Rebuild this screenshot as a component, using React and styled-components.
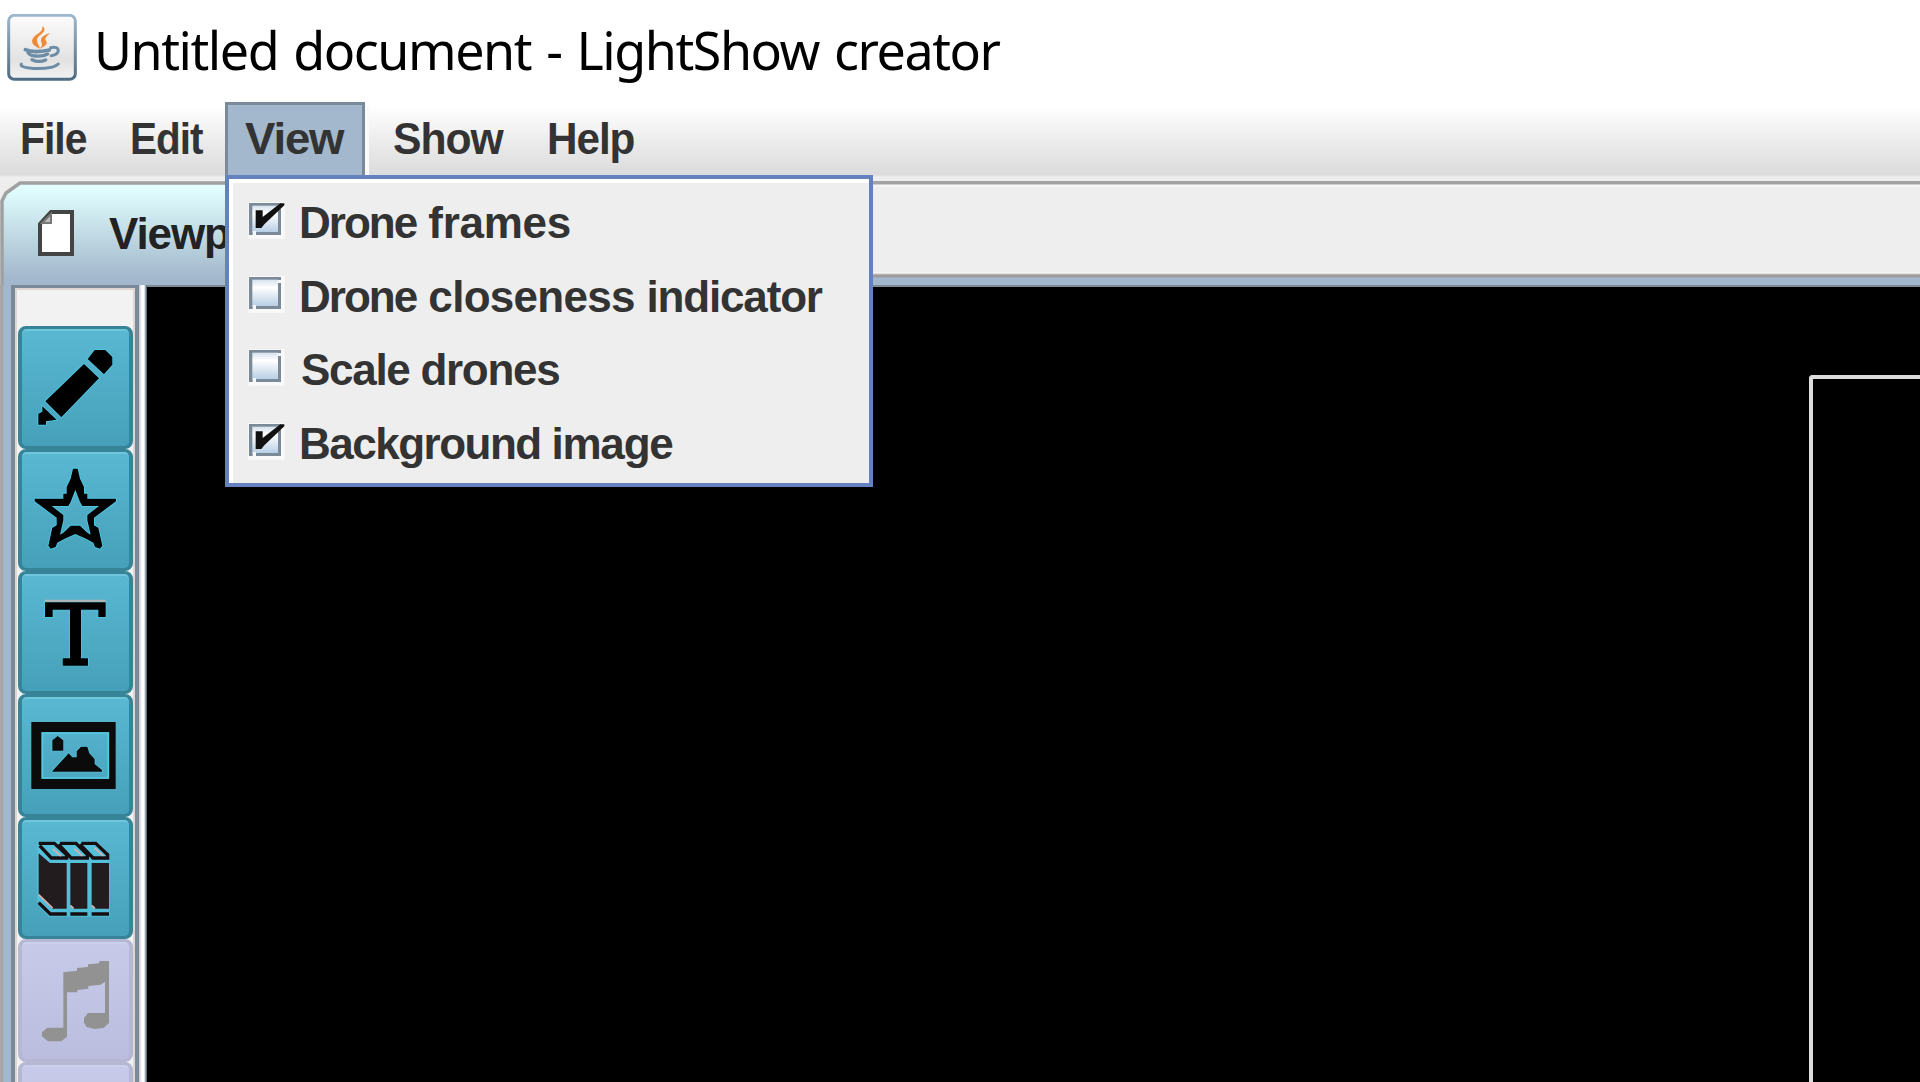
import React from "react";
import styled, { createGlobalStyle } from "styled-components";

const Global = createGlobalStyle`
  * { box-sizing: border-box; }
  body { margin: 0; background: #000; overflow: hidden; }
`;

const Window = styled.div`
  width: 1920px;
  height: 1082px;
  display: flex;
  flex-direction: column;
  overflow: hidden;
  background: #eee;
  font-family: "Liberation Sans", Arial, sans-serif;
`;

const TitleBar = styled.header`
  height: 102px;
  flex: none;
  display: flex;
  padding: 14px 0 0 7px;
  background: #fff;
`;

const Title = styled.h1`
  margin: 0 0 0 17px;
  font: 400 52px/72px "Noto Sans", "Open Sans", sans-serif;
  letter-spacing: -1.45px;
  word-spacing: 3px;
  color: #000;
  white-space: pre;
`;

const MenuBar = styled.nav`
  height: 79px;
  flex: none;
  display: flex;
  background: linear-gradient(#fff 0, #fff 3px, #dcdcdc 71px, #dcdcdc 73px, #eee 75px, #eee 79px);
`;

const MenuSlot = styled.div`
  position: relative;
  width: ${(p) => p.$w}px;
  height: 73px;
  padding-left: ${(p) => p.$pad}px;
  ${(p) =>
    p.$open &&
    `background: #a3b8cc; border: solid #7a8a99; border-width: 3px 3px 0 3px; box-shadow: 4px 3px 0 #fafafa;`}
`;

const Label = styled.span`
  display: block;
  font-weight: 700;
  font-size: 44px;
  line-height: 50px;
  letter-spacing: -1.1px;
  color: #333;
  white-space: pre;
  transform: scaleX(${(p) => p.$stretch ?? 1});
  transform-origin: 0 0;
`;

const MenuLabel = styled(Label)`
  margin-top: ${(p) => (p.$open ? 9 : 12)}px;
`;

const Word = styled.span`
  letter-spacing: ${(p) => p.$track}px;
  word-spacing: ${(p) => p.$space ?? 0}px;
`;

const Popup = styled.div`
  position: absolute;
  z-index: 5;
  left: -3px;
  top: 70px;
  width: 648px;
  height: 312px;
  padding: 19px 0 0 16px;
  border: 4px solid #6382bf;
  background: #eee;
  box-shadow: inset 4px 4px 0 #fff;
`;

const Item = styled.div`
  display: flex;
  height: 73.6px;
`;

const Check = styled.svg`
  width: 42px;
  height: 42px;
  flex: none;
  margin: 2px ${(p) => p.$gap}px 0 2px;
`;

const TabStrip = styled.div`
  height: 104px;
  flex: none;
  display: flex;
  background: linear-gradient(#a2a2a2 0 3px, #f8f8f8 4px, #eee 7px, #eee 90px, #f6f6f6 92px, #a09c9a 94px, #a09c9a 96px, #a3b8cc 97px, #a3b8cc 104px);
`;

const Tab = styled.div`
  display: flex;
  width: 400px;
  height: 104px;
  background: #eee;
  position: relative;
`;

const TabShape = styled.svg`
  position: absolute;
  inset: 0;
  width: 400px;
  height: 104px;
`;

const TabLabel = styled(Label)`
  position: relative;
  margin: 28px 0 0 109px;
  color: #222;
`;

const Body = styled.main`
  flex: 1;
  min-height: 0;
  display: flex;
  background: linear-gradient(to right, #a6a6a6 0 3px, #a3b8cc 4px, #a3b8cc 11px);
`;

const ToolBar = styled.aside`
  width: 128px;
  margin-left: 11px;
  padding: 38px 2px 0 3px;
  border: solid #7a8a99;
  border-width: 3px 4px 0 4px;
  background: #f2f2f2;
  box-shadow: inset 2px 2px 0 #ddd6d3, inset -2px 0 0 #ddd6d3;
  overflow: hidden;
`;

const ToolButton = styled.div`
  width: 115px;
  height: 122.7px;
  padding-top: 1px;
  border: 4px solid ${(p) => (p.$off ? "#b5b7d3" : "#378499")};
  border-width: 3px 4px;
  border-radius: 8px;
  background: ${(p) =>
    p.$off ? "linear-gradient(#c7cae9, #babddd)" : "linear-gradient(#5ab8d2, #46a0b9)"};
  box-shadow: inset 0 2px 0 ${(p) => (p.$off ? "#cdd0ed" : "#70c6dc")};

  svg {
    display: block;
    width: 115px;
    height: 122.7px;
    margin: -3px 0 0 -4px;
  }
`;

const Gutter = styled.div`
  width: 8px;
  background: linear-gradient(to right, #c4c8d2, #fff 3px, #fff 5px, #7a8a99 7px, #4a545e);
`;

const Viewport = styled.div`
  flex: 1;
  padding: 88px 0 0 1662px;
  border-top: 2px solid #7a8a99;
  background: #000;
`;

const Frame = styled.div`
  height: 720px;
  border: 4px solid #ddd;
  border-width: 4px 0 0 4px;
  border-top-left-radius: 4px;
`;

function JavaIcon() {
  return (
    <svg width="70" height="68" viewBox="21 42 210 204">
      <defs>
        <linearGradient id="rim" x2="0" y2="1">
          <stop stopColor="#9db7cf" />
          <stop offset="1" stopColor="#4f6d82" />
        </linearGradient>
        <linearGradient id="face" x2="0" y2="1">
          <stop stopColor="#fdfdfd" />
          <stop offset=".7" stopColor="#e2e2e2" />
          <stop offset="1" stopColor="#f2f2f2" />
        </linearGradient>
      </defs>
      <rect x="26" y="46" width="200" height="192" rx="17" fill="url(#face)" stroke="url(#rim)" strokeWidth="9" />
      <path d="M128 77 C141 91 128 99 116 109 C106 120 114 131 120 146 C90 134 91 118 108 105 C122 95 128 91 128 77Z" fill="#f18a35" />
      <path d="M151 100 C132 103 119 114 124 126 C128 134 126 139 119 146 C142 137 143 129 137 121 C133 114 142 107 151 100Z" fill="#f18a35" />
      <g fill="none" stroke="#6d8ca5" strokeLinecap="round">
        <path d="M76 149 Q100 160 148 150" strokeWidth="11" />
        <path d="M84 158 Q91 168 105 168 Q129 170 143 162" strokeWidth="10" />
        <path d="M152 143 Q174 139 175 151 Q174 164 154 167" strokeWidth="9" />
        <path d="M96 179 Q116 189 137 180" strokeWidth="10" />
        <path d="M64 192 Q60 201 88 204 Q120 208 155 202 Q169 198 175 192" strokeWidth="9" />
      </g>
    </svg>
  );
}

function CheckIcon({ on, gap }) {
  return (
    <Check viewBox="80 105 126 126" $gap={gap}>
      <defs>
        <linearGradient id="box" x2="0" y2="1">
          <stop stopColor="#d6e2ee" />
          <stop offset=".3" stopColor="#fff" />
          <stop offset="1" stopColor="#b8cfe5" />
        </linearGradient>
      </defs>
      <path d="M84 111H193V221H84Z" fill="#f9f9f9" />
      <path d="M86 114H182V210H86Z" fill="#7a8a99" />
      <rect x="96" y="122" width="77" height="79" fill="url(#box)" />
      <path d="M97 198H107V211H97Z M172 123H183V132H172Z" fill="#f7f7f7" />
      {on && <path d="M106 136H127V156L180 115H192V121L132 178L123 189H106Z" fill="#111" />}
    </Check>
  );
}

const tools = [
  {
    name: "pencil",
    box: "54 21 345 368",
    art: (
      <g stroke="#4ccbe9" strokeWidth="5" paintOrder="stroke">
        <path d="M284 90H316L337 111V134L312 163L263 117Z" />
        <path d="M252 132L297 175L184 292L136 244Z" />
        <path d="M127 259L170 299L138 304V314H115V281L127 275Z" />
      </g>
    ),
  },
  {
    name: "star",
    box: "54 389 345 368",
    art: (
      <path
        d="M219 445H233L240 475L252 500V520H262V535H348V543L282 592V615L295 622L307 676L300 685L285 680L280 667L258 655L226 641L194 655L172 667L167 680L152 685L145 676L157 622L170 615V592L104 543V535H190V520H200V500L212 475Z M226 508L212 545L205 557H155L190 584V600L180 643L190 637L212 616H240L262 637L272 643L262 600V584L297 557H247L240 545Z"
        fillRule="evenodd"
        stroke="#4ccbe9"
        strokeWidth="5"
        paintOrder="stroke"
      />
    ),
  },
  {
    name: "text",
    box: "54 37 345 368",
    art: (
      <g>
        <path d="M134 124H317" stroke="#b8b2b0" strokeWidth="8" />
        <path
          d="M135 128H317V172H295V150H243V296H264V318H188V296H210V150H158V172H135Z"
          stroke="#4ccbe9"
          strokeWidth="4"
          paintOrder="stroke"
        />
      </g>
    ),
  },
  {
    name: "image",
    box: "54 405 345 368",
    art: (
      <g>
        <path d="M94 486H347V687H94Z M125 517V656H327V517Z" fillRule="evenodd" fill="#0b0b0b" />
        <path d="M127 519H325V654H127Z" fill="none" stroke="#55cbe6" strokeWidth="5" />
        <path
          d="M157 541L173 528L190 541V572H157Z M157 633L206 580L217 592H230V574L243 560H262L268 580L284 597V612L306 630V635H157Z"
          fill="#0b0b0b"
          stroke="#55cbe6"
          strokeWidth="4"
          paintOrder="stroke"
        />
      </g>
    ),
  },
  {
    name: "library",
    box: "54 22 345 368",
    art: (
      <g>
        <path d="M112 91H285L329 132V318H146L112 280Z" fill="#55c9e4" opacity=".65" />
        <path d="M116 128L150 157H200V294H158L116 251Z M211 157H262V294H221L211 284Z M275 157H327V294H286L275 284Z" fill="#231c1e" />
        <g fill="none" stroke="#160d10" strokeWidth="10">
          <path d="M116 98H163L200 132V142H154L119 105 M180 98H228L262 132V142H214L176 101 M244 98H287L323 132V142H279L240 101" />
          <path d="M116 276L151 310H200 M211 310H262 M275 310H327" />
        </g>
        <g stroke="#dcaeaa" strokeWidth="5">
          <path d="M158 114L183 136M223 114L247 136M284 112L310 136M116 252L158 292M211 284L221 293M275 284L285 293" />
        </g>
      </g>
    ),
  },
  {
    name: "music",
    box: "54 390 345 368",
    off: true,
    art: (
      <path
        fill="#929292"
        d="M190 487L231 482V474L264 471V463L298 460V453H327V639L310 654L284 657L260 651L252 638V624L264 609H315V515L302 524L265 528V536L232 540V547H201V680L184 694H144L126 679V667L142 653H190Z"
      />
    ),
  },
  { name: "blank", box: "0 0 345 368", off: true, art: null },
];

const options = [
  { words: [["Drone ", -2, 2], ["frames", -0.3]], on: true, gap: 10 },
  { words: [["Drone ", -2, 2], ["closeness ", -0.7], ["indicator", -1.15]], gap: 10 },
  { words: [["Scale ", -1.3], ["drones", -1.3]], gap: 12 },
  { words: [["Background ", -1.5], ["image", -1.2]], on: true, gap: 10 },
];

export default function App() {
  return (
    <Window>
      <Global />
      <TitleBar>
        <JavaIcon />
        <Title>Untitled document - LightShow creator</Title>
      </TitleBar>
      <MenuBar>
        <MenuSlot $w={112} $pad={20}><MenuLabel $stretch={0.93}>File</MenuLabel></MenuSlot>
        <MenuSlot $w={113} $pad={18}><MenuLabel $stretch={0.92}>Edit</MenuLabel></MenuSlot>
        <MenuSlot $w={140} $pad={17} $open>
          <MenuLabel $open $stretch={1.035}>View</MenuLabel>
          <Popup>
            {options.map((o, i) => (
              <Item key={i}>
                <CheckIcon on={o.on} gap={o.gap} />
                <Label>
                  {o.words.map(([text, track, space]) => (
                    <Word key={text} $track={track} $space={space}>{text}</Word>
                  ))}
                </Label>
              </Item>
            ))}
          </Popup>
        </MenuSlot>
        <MenuSlot $w={162} $pad={28}><MenuLabel $stretch={0.97}>Show</MenuLabel></MenuSlot>
        <MenuSlot $w={130} $pad={20}><MenuLabel $stretch={0.96}>Help</MenuLabel></MenuSlot>
      </MenuBar>
      <TabStrip>
        <Tab>
          <TabShape viewBox="0 0 400 104">
            <defs>
              <linearGradient id="tab" x2="0" y2="1">
                <stop offset=".04" stopColor="#e2ffff" />
                <stop offset=".93" stopColor="#a3b8cc" />
              </linearGradient>
            </defs>
            <path d="M2 104V20L6 12L13 7L20 2H400V104Z" fill="url(#tab)" />
            <path d="M2 104V20L6 12L13 7L20 2H400" fill="none" stroke="#a0a0a0" strokeWidth="3.5" />
            <path d="M51 31H72V73H40V43Z" fill="#fff" stroke="#444" strokeWidth="4" />
            <path d="M42 42L51 33V42Z" fill="#bbb" stroke="#777" strokeWidth="2" />
          </TabShape>
          <TabLabel>Viewport</TabLabel>
        </Tab>
      </TabStrip>
      <Body>
        <ToolBar>
          {tools.map((t) => (
            <ToolButton key={t.name} $off={t.off}>
              <svg viewBox={t.box}>{t.art}</svg>
            </ToolButton>
          ))}
        </ToolBar>
        <Gutter />
        <Viewport>
          <Frame />
        </Viewport>
      </Body>
    </Window>
  );
}
